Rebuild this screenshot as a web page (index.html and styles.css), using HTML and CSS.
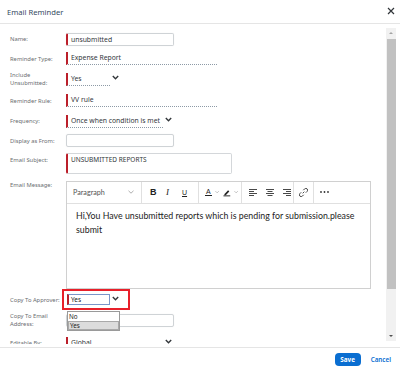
FILE: index.html
```html
<!DOCTYPE html>
<html>
<head>
<meta charset="utf-8">
<link rel="stylesheet" href="styles.css">
</head>
<body>
<div class="dialog">
  <div class="header">
    <span class="title">Email Reminder</span>
    <svg class="close" width="8" height="8" viewBox="0 0 8 8"><path d="M1 1L7 7M7 1L1 7" stroke="#32363a" stroke-width="1.2"/></svg>
  </div>
  <div class="main">
    <div class="content">
      <div class="form">
        <div class="label">Name:</div>
        <div class="ctl"><div class="input req w108">unsubmitted</div></div>

        <div class="label">Reminder Type:</div>
        <div class="ctl"><div class="sel req w149">Expense Report</div></div>

        <div class="label">Include<br>Unsubmitted:</div>
        <div class="ctl"><div class="sel req w42">Yes</div><svg class="chev" width="7" height="5" viewBox="0 0 7 5"><path d="M0.8 1L3.5 3.7L6.2 1" fill="none" stroke="#32363a" stroke-width="1.4"/></svg></div>

        <div class="label">Reminder Rule:</div>
        <div class="ctl"><div class="sel req w149">VV rule</div></div>

        <div class="label">Frequency:</div>
        <div class="ctl"><div class="sel req w95">Once when condition is met</div><svg class="chev" width="7" height="5" viewBox="0 0 7 5"><path d="M0.8 1L3.5 3.7L6.2 1" fill="none" stroke="#32363a" stroke-width="1.4"/></svg></div>

        <div class="label">Display as From:</div>
        <div class="ctl"><div class="input w108"></div></div>

        <div class="label top">Email Subject:</div>
        <div class="ctl"><div class="textarea req">UNSUBMITTED REPORTS</div></div>

        <div class="label top2">Email Message:</div>
        <div class="ctl">
          <div class="editor">
            <div class="toolbar">
              <div class="grp g1"><span class="para">Paragraph</span><svg width="6" height="4" viewBox="0 0 6 4"><path d="M0.5 0.8L3 3.2L5.5 0.8" fill="none" stroke="#999" stroke-width="0.8"/></svg></div>
              <div class="grp g2"><span class="tb b">B</span><span class="tb i">I</span><span class="tb u">U</span></div>
              <div class="grp g3">
                <span class="acol">A</span><svg class="sc" width="5" height="4" viewBox="0 0 5 4"><path d="M0.5 1L2.5 3L4.5 1" fill="none" stroke="#999" stroke-width="0.7"/></svg>
                <svg class="pen" width="9" height="9" viewBox="0 0 9 9"><path d="M1.8 6.2L6 2L7.4 3.4L3.2 7.6L1.4 7.8Z" fill="#222"/><rect x="0.5" y="7.9" width="8" height="1.1" fill="#222"/></svg><svg class="sc" width="5" height="4" viewBox="0 0 5 4"><path d="M0.5 1L2.5 3L4.5 1" fill="none" stroke="#999" stroke-width="0.7"/></svg>
              </div>
              <div class="grp g4">
                <svg width="8" height="7" viewBox="0 0 8 7"><path d="M0 0.5H8M0 2.5H5M0 4.5H8M0 6.5H5" stroke="#333" stroke-width="0.9"/></svg>
                <svg width="8" height="7" viewBox="0 0 8 7"><path d="M0 0.5H8M1.5 2.5H6.5M0 4.5H8M1.5 6.5H6.5" stroke="#333" stroke-width="0.9"/></svg>
                <svg width="8" height="7" viewBox="0 0 8 7"><path d="M0 0.5H8M3 2.5H8M0 4.5H8M3 6.5H8" stroke="#333" stroke-width="0.9"/></svg>
              </div>
              <div class="grp g5"><svg width="9" height="9" viewBox="0 0 9 9"><path d="M3.7 5.3L5.3 3.7M4.3 2.2L5.6 0.9A1.5 1.5 0 0 1 8.1 3.4L6.8 4.7M4.7 6.8L3.4 8.1A1.5 1.5 0 0 1 0.9 5.6L2.2 4.3" fill="none" stroke="#333" stroke-width="0.9"/></svg></div>
              <div class="grp g6"><svg width="9" height="2" viewBox="0 0 9 2"><circle cx="1" cy="1" r="0.9" fill="#333"/><circle cx="4.5" cy="1" r="0.9" fill="#333"/><circle cx="8" cy="1" r="0.9" fill="#333"/></svg></div>
            </div>
            <div class="ed-body">Hi,You Have unsubmitted reports which is pending for submission.please submit</div>
          </div>
        </div>

        <div class="label">Copy To Approver:</div>
        <div class="ctl">
          <div class="highlight">
            <div class="selbox">Yes</div>
            <svg class="chev" width="7" height="5" viewBox="0 0 7 5"><path d="M0.8 1L3.5 3.7L6.2 1" fill="none" stroke="#32363a" stroke-width="1.4"/></svg>
            <div class="dropdown">
              <div class="opt">No</div>
              <div class="opt active">Yes</div>
            </div>
          </div>
        </div>

        <div class="label">Copy To Email<br>Address:</div>
        <div class="ctl"><div class="input w108"></div></div>

        <div class="label">Editable By:</div>
        <div class="ctl"><div class="sel req w95">Global</div><svg class="chev" width="7" height="5" viewBox="0 0 7 5"><path d="M0.8 1L3.5 3.7L6.2 1" fill="none" stroke="#32363a" stroke-width="1.4"/></svg></div>
      </div>
    </div>
    <div class="scrollbar">
      <div class="arrow up"></div>
      <div class="thumb"></div>
      <div class="spacer"></div>
      <div class="arrow down"></div>
    </div>
  </div>
  <div class="footer">
    <button class="save">Save</button>
    <span class="cancel">Cancel</span>
  </div>
</div>
</body>
</html>
```
FILE: styles.css
```css
* { box-sizing: border-box; }
html, body { margin: 0; padding: 0; background: #fff; }
body { font-family: "Noto Sans", "Open Sans", sans-serif; color: #32363a; }

.dialog { width: 400px; height: 371px; display: flex; flex-direction: column; overflow: hidden; }

.header { height: 24px; border-bottom: 1px solid #e5e5e5; display: flex; align-items: center; justify-content: space-between; padding: 0 5px 0 7px; flex: none; }
.title { font-size: 7.6px; color: #354a5f; }
.close { margin-top: -1px; }

.main { height: 323px; display: flex; flex: none; }
.content { flex: 1; overflow: hidden; padding: 5px 0 0 10px; height: 320px; }

.form { display: grid; grid-template-columns: 56px auto; grid-template-rows: 20px 19px 22px 21px 20px 19px 27px 115px 15px 26px 20px; }
.label { font-size: 5.8px; color: #6a6d70; align-self: center; line-height: 8px; }
.label.top { align-self: start; padding-top: 6px; }
.label.top2 { align-self: start; padding-top: 4px; }
.ctl { display: flex; align-items: center; position: relative; }

.input { height: 13px; border: 1px solid #cfd3d6; border-radius: 2px; font-size: 6.8px; color: #32363a; padding-left: 3px; line-height: 11px; box-shadow: 0 0 1px rgba(0,0,0,0.1); }
.req { border-left: 2px solid #bb1f2a; }
.w108 { width: 108px; }

.sel { height: 13px; font-size: 6.8px; line-height: 12px; padding-left: 3px; border-bottom: 1px dotted #8d9aa6; color: #32363a; }
.w149 { width: 151px; }
.w42 { width: 44px; }
.w95 { width: 97px; }
.chev { margin-left: 2px; margin-top: -3px; }

.textarea { width: 166px; height: 21px; border: 1px solid #d4d7da; border-radius: 2px; font-size: 6.5px; padding: 2px 3px; line-height: 8px; }
.textarea.req { border-left: 2px solid #bb1f2a; }

.editor { width: 305px; height: 108px; border: 1px solid #d0d0d0; display: flex; flex-direction: column; }
.toolbar { height: 22px; border-bottom: 1px solid #e0e0e0; display: flex; flex: none; }
.grp { display: flex; align-items: center; border-right: 1px solid #e0e0e0; height: 100%; }
.g1 { width: 75px; padding: 0 0 0 6px; justify-content: space-between; padding-right: 7px; }
.para { font-family: "Lato", sans-serif; font-size: 7.2px; color: #555; }
.g2 { width: 57px; padding-left: 8px; gap: 0; }
.tb { display: inline-block; width: 17px; font-family: "Liberation Sans", sans-serif; color: #222; }
.tb.b { font-weight: bold; font-size: 9px; }
.tb.i { font-style: italic; font-size: 9px; font-family: "Liberation Serif", serif; }
.tb.u { text-decoration: underline; font-size: 7px; }
.g3 { width: 43px; padding-left: 6px; }
.acol { font-family: "Liberation Sans", sans-serif; font-size: 7px; color: #222; border-bottom: 1.3px solid #222; line-height: 7px; width: 8px; text-align: center; }
.sc { margin: 0 3px 0 3px; }
.pen { margin-left: 1px; }
.g4 { width: 52px; padding-left: 7px; gap: 9px; }
.g5 { width: 20px; justify-content: center; }
.g6 { width: 20px; justify-content: center; border-right: none; }
.ed-body { font-family: "Lato", sans-serif; font-size: 8.8px; line-height: 14px; color: #222; padding: 5px 9px; }

.highlight { position: relative; display: flex; align-items: center; width: 68px; height: 21px; border: 2px solid #e8202a; margin-left: -4px; padding-left: 3px; align-self: center; z-index: 2; }
.selbox { width: 43px; height: 11px; border: 1px solid #7a96c9; border-left: 2px solid #bb1f2a; font-size: 6.5px; line-height: 9px; padding-left: 2px; background: #fff; color: #222; }
.dropdown { position: absolute; left: 3px; top: 20px; width: 53px; border: 1px solid #9a9a9a; background: #fff; }
.opt { font-size: 6.3px; height: 9px; line-height: 9px; padding-left: 1px; color: #222; }
.opt.active { background: #dcdcdc; border: 1px solid #a9a9a9; line-height: 7px; }

.scrollbar { width: 10px; margin: 4px 4px 0 0; height: 313px; background: #f1f1f1; display: flex; flex-direction: column; flex: none; }
.arrow { height: 11px; flex: none; position: relative; }
.arrow::after { content: ""; position: absolute; left: 3px; border-left: 2px solid transparent; border-right: 2px solid transparent; }
.arrow.up::after { top: 4px; border-bottom: 2px solid #a3a3a3; }
.arrow.down::after { top: 5px; border-top: 2px solid #505050; }
.thumb { height: 250px; margin: 0 0.5px; background: #c1c1c1; flex: none; }
.spacer { flex: 1; }

.footer { flex: 1; border-top: 1px solid #e5e5e5; display: flex; align-items: center; justify-content: flex-end; padding-right: 9px; gap: 10px; }
.save { width: 26px; height: 13px; border: none; border-radius: 4px; background: #0a6ed1; color: #fff; font-family: "Noto Sans", sans-serif; font-size: 6.3px; font-weight: bold; padding: 0; }
.cancel { font-size: 6.3px; color: #0a6ed1; font-weight: 600; }
```
